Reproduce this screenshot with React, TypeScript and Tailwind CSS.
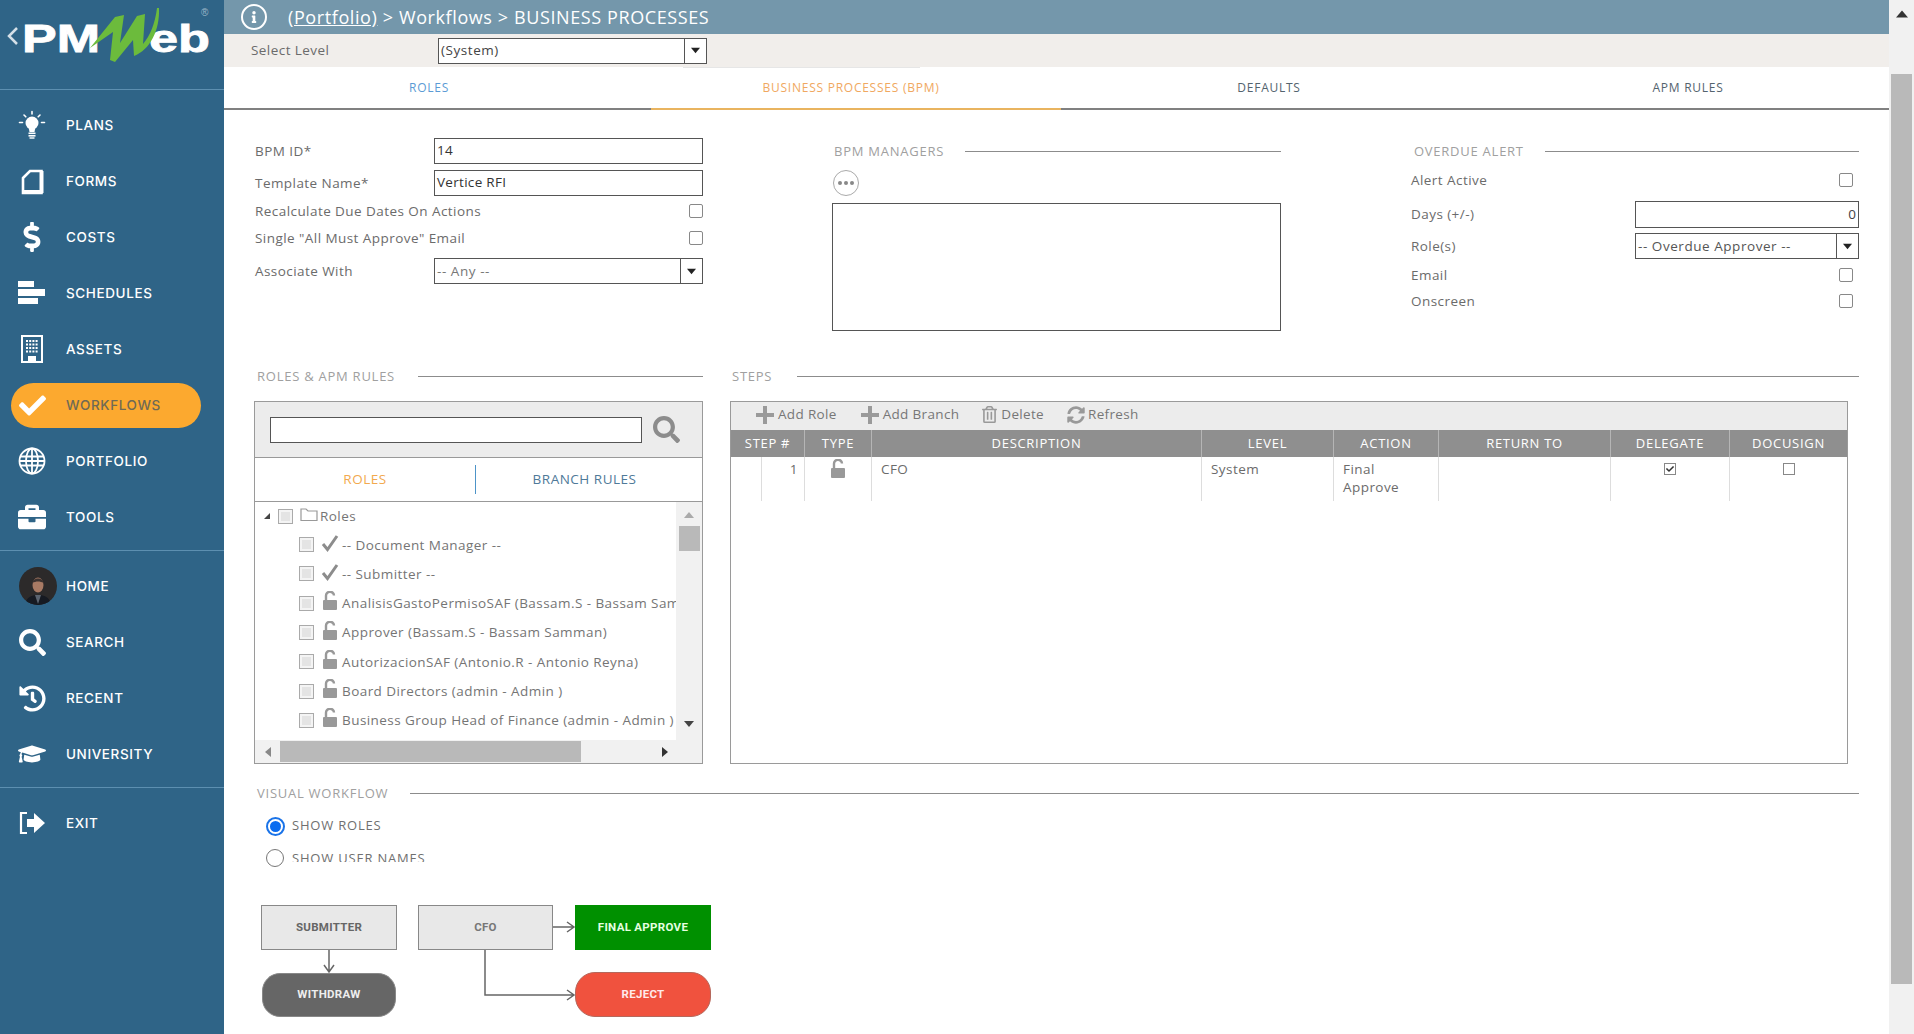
import React from 'react';
import { FaDollarSign, FaCheck, FaBriefcase, FaSearch, FaHistory, FaGraduationCap, FaRegTrashAlt, FaSyncAlt, FaInfo } from 'react-icons/fa';

const BulbIcon = () => (
  <svg width="28" height="30" viewBox="0 0 28 30" fill="white">
    <circle cx="14" cy="13" r="6.5" />
    <path d="M10.5 17h7l-1 5h-5z" />
    <rect x="10.5" y="22.5" width="7" height="1.6" />
    <rect x="10.5" y="25" width="7" height="1.6" />
    <rect x="11.5" y="27.3" width="5" height="1.4" />
    <g stroke="white" strokeWidth="1.6" strokeLinecap="round">
      <path d="M14 1.5v2.5M6 5l1.8 1.8M22 5l-1.8 1.8M1.5 12.500h3M23.500 12.500h3" />
    </g>
  </svg>
);

const FormIcon = () => (
  <svg width="24" height="28" viewBox="0 0 24 28" fill="none" stroke="white" strokeWidth="2.6">
    <path d="M3 11 10 4h11.500v22H3z" />
    <path d="M21.500 4v22" strokeWidth="4" />
    <path d="M3 25h18" strokeWidth="4" />
  </svg>
);

const ScheduleIcon = () => (
  <svg width="28" height="26" viewBox="0 0 28 26" fill="white">
    <rect x="0" y="1" width="16" height="6" />
    <rect x="0" y="9" width="27" height="7" />
    <rect x="0" y="18" width="20" height="6" />
  </svg>
);

const BuildingIcon = () => (
  <svg width="24" height="28" viewBox="0 0 24 28">
    <rect x="2" y="1" width="20" height="26" fill="none" stroke="white" strokeWidth="2" />
    <path d="M6 6h12M6 9.500h12M6 13h12M6 16.500h12" stroke="white" strokeWidth="2" strokeDasharray="2 1.200" />
    <rect x="8" y="21" width="8" height="6" fill="white" />
  </svg>
);

const GlobeIcon = () => (
  <svg width="28" height="28" viewBox="0 0 28 28" fill="none" stroke="white" strokeWidth="1.800">
    <circle cx="14" cy="14" r="12.500" />
    <ellipse cx="14" cy="14" rx="6" ry="12.500" />
    <path d="M14 1.500v25M2 9.500h24M2 18.500h24M1.500 14h25" />
  </svg>
);

const ExitIcon = () => (
  <svg width="28" height="24" viewBox="0 0 28 24">
    <path d="M9 2H3v20h6" fill="none" stroke="white" strokeWidth="2.200" />
    <path d="M9 8h7V2l11 10-11 10v-6H9z" fill="white" />
  </svg>
);

const Avatar = () => (
  <svg width="38" height="38" viewBox="0 0 38 38" className="rounded-full shrink-0 ml-[1px] -mr-[11px]">
    <rect width="38" height="38" fill="#2c2a2a" />
    <path d="M6 38c1-8 7-10 13-10s12 2 13 10z" fill="#161a22" />
    <path d="M16 28l3 9 3-9z" fill="#5b6470" />
    <ellipse cx="19" cy="18" rx="5.500" ry="7.500" fill="#a87a64" />
    <path d="M13.500 16c0-6 11-6 11 0-3-2-8-2-11 0z" fill="#3b3230" />
  </svg>
);

const navTop = [
  { label: 'PLANS', icon: <BulbIcon /> },
  { label: 'FORMS', icon: <FormIcon /> },
  { label: 'COSTS', icon: <FaDollarSign size={30} color="white" /> },
  { label: 'SCHEDULES', icon: <ScheduleIcon /> },
  { label: 'ASSETS', icon: <BuildingIcon /> },
  { label: 'WORKFLOWS', icon: <FaCheck size={27} color="white" />, active: true },
  { label: 'PORTFOLIO', icon: <GlobeIcon /> },
  { label: 'TOOLS', icon: <FaBriefcase size={28} color="white" /> },
];

const navMid = [
  { label: 'HOME', icon: <Avatar /> },
  { label: 'SEARCH', icon: <FaSearch size={27} color="white" /> },
  { label: 'RECENT', icon: <FaHistory size={27} color="white" /> },
  { label: 'UNIVERSITY', icon: <FaGraduationCap size={28} color="white" /> },
];

const NavItem = ({ item }: { item: { label: string; icon: React.ReactNode; active?: boolean } }) => (
  <div className="h-[56px] flex items-center">
    <div className={`flex items-center h-[45px] w-[190px] ml-[11px] pl-[7px] rounded-full ${item.active ? 'bg-[#fca92f]' : ''}`}>
      <div className="w-[28px] flex justify-center shrink-0">{item.icon}</div>
      <span className={`ml-[20px] text-[13.5px] font-medium tracking-[0.6px] ${item.active ? 'text-[#6f6a55]' : 'text-white'}`}>{item.label}</span>
    </div>
  </div>
);

const Logo = () => (
  <svg width="224" height="90" viewBox="0 0 224 90">
    <path d="M17 28 9 36l8 8" fill="none" stroke="#d5e0e8" strokeWidth="2.500" />
    <text x="22" y="52" fill="white" stroke="white" strokeWidth="0.8" fontFamily="Liberation Sans" fontWeight="700" fontSize="38" textLength="78" lengthAdjust="spacingAndGlyphs">PM</text>
    <text x="149" y="52" fill="white" stroke="white" strokeWidth="0.8" fontFamily="Liberation Sans" fontWeight="700" fontSize="38" textLength="61" lengthAdjust="spacingAndGlyphs">eb</text>
    <path d="M90 48 115 17l9-2-4 28 17-27 8-2-2 30c7-8 12-20 14-36h2c1 22-9 42-25 48l-1-16-18 22-5-2 3-28z" fill="#6cbb3c" />
    <text x="201" y="16" fill="#9fb9ca" fontFamily="Liberation Sans" fontSize="10">®</text>
  </svg>
);

const Sidebar = () => (
  <aside className="w-[224px] shrink-0 bg-[#2f6487] font-['Inter',sans-serif] overflow-hidden">
    <div className="h-[90px] border-b border-[#5d8fb0]">
      <Logo />
    </div>
    <div className="mt-[7px]">
      {navTop.map((item) => <NavItem key={item.label} item={item} />)}
    </div>
    <div className="mt-[5px] mb-[7px] h-px bg-[#5d8fb0]" />
    {navMid.map((item) => <NavItem key={item.label} item={item} />)}
    <div className="mt-[5px] mb-[7px] h-px bg-[#5d8fb0]" />
    <NavItem item={{ label: 'EXIT', icon: <ExitIcon /> }} />
  </aside>
);

const Tri = ({ dir, className }: { dir: 'up' | 'down' | 'left' | 'right'; className: string }) => {
  const points = { up: '0,8 5,2 10,8', down: '0,2 10,2 5,8', left: '8,0 8,10 2,5', right: '2,0 2,10 8,5' }[dir];
  return (
    <svg width="10" height="10" viewBox="0 0 10 10" className={className}>
      <polygon points={points} fill="currentColor" />
    </svg>
  );
};

const Heading = ({ label, widthClass }: { label: string; widthClass: string }) => (
  <div className="flex items-center h-[20px]">
    <span className={`${widthClass} shrink-0 pt-[1px] text-[13px] text-[#a0a0a0] tracking-[0.75px] whitespace-nowrap`}>{label}</span>
    <div className="flex-1 h-px bg-[#8c8c8c]" />
  </div>
);

const Box = ({ value, className }: { value: string; className: string }) => (
  <div className={`h-[26px] pb-[1px] border border-[#555] bg-white flex items-center px-[2px] text-[13.500px] tracking-[0.3px] text-[#333] ${className}`}>{value}</div>
);

const Select = ({ value, className, arrowClass, textClass }: { value: string; className: string; arrowClass: string; textClass: string }) => (
  <div className={`h-[26px] border border-[#555] bg-white flex items-center ${className}`}>
    <span className={`flex-1 px-[2px] text-[13.500px] tracking-[0.55px] whitespace-nowrap ${textClass}`}>{value}</span>
    <div className={`h-full border-l border-[#555] flex items-center justify-center ${arrowClass}`}>
      <Tri dir="down" className="text-[#222] w-[9px] h-[9px]" />
    </div>
  </div>
);

const Check = () => <div className="w-[14px] h-[14px] rounded-[2px] border border-[#888] bg-white" />;

const Label = ({ children }: { children: React.ReactNode }) => (
  <span className="text-[13.500px] text-[#6b6b6b] tracking-[0.44px] whitespace-nowrap">{children}</span>
);

const LockOpen = ({ className }: { className: string }) => (
  <svg width="16" height="20" viewBox="0 0 16 20" className={className}>
    <path d="M4 9V5a4 4 0 0 1 8-.500" fill="none" stroke="currentColor" strokeWidth="2.400" />
    <rect x="1" y="9" width="14" height="10" rx="1" fill="currentColor" />
  </svg>
);

const CheckMark = () => (
  <svg width="18" height="18" viewBox="0 0 18 18">
    <path d="M2 10l4.500 5.500L16 2" fill="none" stroke="#8c8c8c" strokeWidth="3" />
  </svg>
);

const PlusIcon = () => (
  <svg width="20" height="20" viewBox="0 0 20 20" fill="#9a9a9a">
    <rect x="8" y="1" width="4" height="18" />
    <rect x="1" y="8" width="18" height="4" />
  </svg>
);

const treeRows = [
  { text: '-- Document Manager --', mark: 'check' },
  { text: '-- Submitter --', mark: 'check' },
  { text: 'AnalisisGastoPermisoSAF (Bassam.S - Bassam Samman)', mark: 'lock' },
  { text: 'Approver (Bassam.S - Bassam Samman)', mark: 'lock' },
  { text: 'AutorizacionSAF (Antonio.R - Antonio Reyna)', mark: 'lock' },
  { text: 'Board Directors (admin - Admin )', mark: 'lock' },
  { text: 'Business Group Head of Finance (admin - Admin )', mark: 'lock' },
];

const TreeBox = () => <div className="w-[15px] h-[15px] shrink-0 border border-[#aaa] bg-[#e4e4e4] shadow-[inset_0_0_0_2px_#f4f4f4]" />;

const RolesPanel = () => (
  <div className="h-[363px] border border-[#9a9a9a] flex flex-col">
    <div className="h-[56px] bg-[#ececec] border-b border-[#999] flex items-center shrink-0">
      <div className="ml-[15px] w-[372px] h-[26px] border border-[#555] bg-white" />
      <FaSearch size={27} className="ml-[11px] text-[#8c8c8c]" />
    </div>
    <div className="h-[44px] border-b border-[#999] flex items-center shrink-0 text-[13.500px] tracking-[0.5px]">
      <div className="w-[220px] text-center text-[#f2a94e]">ROLES</div>
      <div className="w-px h-[29px] bg-[#4d94c8]" />
      <div className="flex-1 pr-[9px] text-center text-[#4f7a99]">BRANCH RULES</div>
    </div>
    <div className="flex-1 flex min-h-0">
      <div className="flex-1 min-w-0 overflow-hidden text-[13.500px] text-[#757575] tracking-[0.44px]">
        <div className="h-[28px] flex items-center pl-[8px] whitespace-nowrap">
          <svg width="8" height="8" viewBox="0 0 8 8" className="shrink-0">
            <polygon points="7,1 7,7 1,7" fill="#444" />
          </svg>
          <div className="ml-[7px]"><TreeBox /></div>
          <svg width="18" height="15" viewBox="0 0 18 15" className="ml-[7px] mb-[3px]">
            <path d="M1 13V2h5l2 2h9v9.500H1z" fill="none" stroke="#999" strokeWidth="1.200" />
          </svg>
          <span className="ml-[2px]">Roles</span>
        </div>
        {treeRows.map((row) => (
          <div key={row.text} className="h-[29.3px] flex items-center pl-[44px] whitespace-nowrap">
            <TreeBox />
            <div className="w-[28px] pl-[4px] flex justify-center shrink-0 mb-[4px]">
              {row.mark === 'check' ? <CheckMark /> : <LockOpen className="text-[#999]" />}
            </div>
            <span>{row.text}</span>
          </div>
        ))}
      </div>
      <div className="w-[26px] shrink-0 bg-[#f1f1f1] flex flex-col items-center">
        <Tri dir="up" className="text-[#aaa] mt-[8px]" />
        <div className="mt-[6px] w-[21px] h-[25px] bg-[#b9b9b9]" />
        <Tri dir="down" className="text-[#444] mt-[168px]" />
      </div>
    </div>
    <div className="h-[23px] shrink-0 bg-[#f1f1f1] flex items-center">
      <Tri dir="left" className="text-[#888] ml-[8px]" />
      <div className="ml-[7px] w-[301px] h-[21px] bg-[#b9b9b9]" />
      <Tri dir="right" className="text-[#333] ml-[79px]" />
    </div>
  </div>
);

const stepHeads = ['STEP #', 'TYPE', 'DESCRIPTION', 'LEVEL', 'ACTION', 'RETURN TO', 'DELEGATE', 'DOCUSIGN'];
const stepCols = 'grid grid-cols-[74px_67px_330px_132px_105px_172px_119px_117px]';

const ToolButton = ({ icon, label, className }: { icon: React.ReactNode; label: string; className: string }) => (
  <div className={`flex items-center gap-[3px] ${className}`}>
    {icon}
    <span>{label}</span>
  </div>
);

const StepsPanel = () => (
  <div className="h-[363px] w-[1118px] border border-[#9a9a9a]">
    <div className="h-[28px] pb-[3px] bg-[#ececec] flex items-center text-[13.500px] text-[#777] tracking-[0.33px]">
      <ToolButton className="ml-[24px]" label="Add Role" icon={<PlusIcon />} />
      <ToolButton className="ml-[23px]" label="Add Branch" icon={<PlusIcon />} />
      <ToolButton className="ml-[22px]" label="Delete" icon={<FaRegTrashAlt size={17} className="text-[#999]" />} />
      <ToolButton className="ml-[23px]" label="Refresh" icon={<FaSyncAlt size={18} className="text-[#999]" />} />
    </div>
    <div className={`${stepCols} h-[27px] bg-[#8f8f8f] text-white text-[13px] tracking-[0.7px]`}>
      {stepHeads.map((h) => (
        <div key={h} className="flex items-center justify-center border-r border-[#b5b5b5] last:border-r-0 whitespace-nowrap">{h}</div>
      ))}
    </div>
    <div className={`${stepCols} h-[44px] text-[13.500px] text-[#6b6b6b] tracking-[0.44px]`}>
      <div className="flex border-r border-[#ddd]">
        <div className="w-[31px] border-r border-[#ddd]" />
        <div className="flex-1 text-right pr-[6px] pt-[2px]">1</div>
      </div>
      <div className="border-r border-[#ddd] flex justify-center pt-[2px]"><LockOpen className="text-[#999]" /></div>
      <div className="border-r border-[#ddd] pl-[9px] pt-[2px]">CFO</div>
      <div className="border-r border-[#ddd] pl-[9px] pt-[2px]">System</div>
      <div className="border-r border-[#ddd] pl-[9px] pt-[3px] leading-[18px]">Final<br />Approve</div>
      <div className="border-r border-[#ddd]" />
      <div className="border-r border-[#ddd] flex justify-center pt-[6px]">
        <div className="w-[12px] h-[12px] border border-[#888] flex items-center justify-center">
          <FaCheck size={8} className="text-[#333]" />
        </div>
      </div>
      <div className="flex justify-center pt-[6px]">
        <div className="w-[12px] h-[12px] border border-[#888]" />
      </div>
    </div>
  </div>
);

const Flow = () => (
  <div className="relative h-[134px] font-['Roboto',sans-serif] font-bold text-[11.500px] tracking-[0.3px]">
    <svg width="500" height="134" viewBox="224 900 500 134" className="absolute left-0 top-0" fill="none" stroke="#666" strokeWidth="1.500">
      <path d="M329 950v22M324 965l5 7 5-7" />
      <path d="M553 927h21M567 922l7 5-7 5" />
      <path d="M485 950v45h89M567 990l7 5-7 5" />
    </svg>
    <div className="absolute left-[37px] top-[5px] w-[136px] h-[45px] bg-[#e8e8e8] border border-[#888] text-[#666] flex items-center justify-center">SUBMITTER</div>
    <div className="absolute left-[194px] top-[5px] w-[135px] h-[45px] bg-[#e8e8e8] border border-[#888] text-[#777] flex items-center justify-center">CFO</div>
    <div className="absolute left-[351px] top-[5px] w-[136px] h-[45px] bg-[#009000] text-[#e6ffe0] flex items-center justify-center">FINAL APPROVE</div>
    <div className="absolute left-[38px] top-[73px] w-[134px] h-[44px] bg-[#666] border border-[#888] rounded-[18px] text-[#eee] flex items-center justify-center">WITHDRAW</div>
    <div className="absolute left-[351px] top-[72px] w-[136px] h-[45px] bg-[#f0523e] border border-[#b5685c] rounded-[20px] text-[#ffeaea] flex items-center justify-center">REJECT</div>
  </div>
);

export default function App() {
  return (
    <div className="h-screen w-full flex overflow-hidden bg-white font-['Open_Sans',sans-serif]">
      <Sidebar />
      <main className="w-[1665px] shrink-0 flex flex-col overflow-hidden">
        <header className="h-[34px] shrink-0 bg-[#7497ab] flex items-center text-white text-[18px] tracking-[0.6px]">
          <div className="ml-[17px] w-[26px] h-[26px] rounded-full border-2 border-white flex items-center justify-center">
            <FaInfo size={12} />
          </div>
          <span className="ml-[21px] whitespace-pre"><span className="underline">(Portfolio)</span> {'>'} Workflows {'>'} BUSINESS PROCESSES</span>
        </header>
        <div className="h-[33px] shrink-0 bg-[#f1eeeb] flex items-center">
          <span className="ml-[27px] w-[187px] text-[13.500px] text-[#6b6b6b] tracking-[0.44px]">Select Level</span>
          <Select value="(System)" className="w-[269px]" arrowClass="w-[22px]" textClass="text-[#444]" />
        </div>
        <div className="h-px shrink-0 ml-[459px] w-[237px] bg-[#e6e6e6]" />
        <div className="h-[42px] shrink-0 flex border-b-2 border-[#808080] text-[12px] tracking-[0.75px]">
          <div className="w-[427px] pr-[17px] flex items-center justify-center text-[#5b9bd5]">ROLES</div>
          <div className="w-[410px] pr-[10px] -mb-[2px] border-b-2 border-[#e9b45f] flex items-center justify-center text-[#f0a860]">BUSINESS PROCESSES (BPM)</div>
          <div className="w-[416px] flex items-center justify-center text-[#54636e]">DEFAULTS</div>
          <div className="w-[412px] pl-[10px] flex items-center justify-center text-[#54636e]">APM RULES</div>
        </div>

        <section className="h-[256px] shrink-0 pt-[28px] flex">
          <div className="ml-[31px] w-[448px] shrink-0">
            <div className="h-[26px] flex items-center justify-between">
              <Label>BPM ID*</Label>
              <Box value="14" className="w-[269px]" />
            </div>
            <div className="h-[26px] mt-[6px] flex items-center justify-between">
              <Label>Template Name*</Label>
              <Box value="Vertice RFI" className="w-[269px]" />
            </div>
            <div className="h-[22px] mt-[4px] flex items-center justify-between">
              <Label>Recalculate Due Dates On Actions</Label>
              <Check />
            </div>
            <div className="h-[22px] mt-[5px] flex items-center justify-between">
              <Label>Single "All Must Approve" Email</Label>
              <Check />
            </div>
            <div className="h-[26px] mt-[9px] flex items-center justify-between">
              <Label>Associate With</Label>
              <Select value="-- Any --" className="w-[269px]" arrowClass="w-[22px]" textClass="text-[#777]" />
            </div>
          </div>

          <div className="ml-[129px] w-[449px] shrink-0">
            <div className="ml-[2px] mt-[3px]">
              <Heading label="BPM MANAGERS" widthClass="w-[131px]" />
            </div>
            <div className="mt-[9px] ml-[1px] w-[26px] h-[26px] rounded-full border border-[#aaa] flex items-center justify-center gap-[2px]">
              <span className="w-[4px] h-[4px] rounded-full bg-[#888]" />
              <span className="w-[4px] h-[4px] rounded-full bg-[#888]" />
              <span className="w-[4px] h-[4px] rounded-full bg-[#888]" />
            </div>
            <div className="mt-[7px] h-[128px] border border-[#555]" />
          </div>

          <div className="ml-[130px] w-[448px] shrink-0">
            <div className="ml-[3px] mt-[3px]">
              <Heading label="OVERDUE ALERT" widthClass="w-[131px]" />
            </div>
            <div className="h-[22px] mt-[8px] flex items-center justify-between pr-[6px]">
              <Label>Alert Active</Label>
              <Check />
            </div>
            <div className="h-[27px] mt-[10px] flex items-center justify-between">
              <Label>Days (+/-)</Label>
              <div className="w-[224px] h-[27px] border border-[#555] flex items-center justify-end pr-[2px] text-[13.500px] text-[#444]">0</div>
            </div>
            <div className="h-[26px] mt-[5px] flex items-center justify-between">
              <Label>Role(s)</Label>
              <Select value="-- Overdue Approver --" className="w-[224px]" arrowClass="w-[22px]" textClass="text-[#555]" />
            </div>
            <div className="h-[22px] mt-[5px] flex items-center justify-between pr-[6px]">
              <Label>Email</Label>
              <Check />
            </div>
            <div className="h-[22px] mt-[4px] flex items-center justify-between pr-[6px]">
              <Label>Onscreen</Label>
              <Check />
            </div>
          </div>
        </section>

        <section className="shrink-0 pl-[30px] flex">
          <div className="w-[449px] shrink-0">
            <div className="ml-[3px] mb-[15px]">
              <Heading label="ROLES & APM RULES" widthClass="w-[161px]" />
            </div>
            <RolesPanel />
          </div>
          <div className="ml-[27px] w-[1129px] shrink-0">
            <div className="ml-[2px] mb-[15px]">
              <Heading label="STEPS" widthClass="w-[65px]" />
            </div>
            <StepsPanel />
          </div>
        </section>

        <section className="shrink-0 mt-[19px]">
          <div className="ml-[33px] w-[1602px]">
            <Heading label="VISUAL WORKFLOW" widthClass="w-[153px]" />
          </div>
          <div className="ml-[42px] mt-[12px] h-[22px] flex items-center text-[13px] text-[#707070] tracking-[0.8px]">
            <div className="w-[19px] h-[19px] rounded-full border-2 border-[#1a73e8] flex items-center justify-center">
              <span className="w-[11px] h-[11px] rounded-full bg-[#0a6cf0]" />
            </div>
            <span className="ml-[7px]">SHOW ROLES</span>
          </div>
          <div className="ml-[42px] mt-[11px] h-[20px] flex items-start text-[13px] text-[#707070] tracking-[0.8px]">
            <div className="w-[18px] h-[18px] mt-[1px] rounded-full border border-[#777]" />
            <span className="ml-[8px] h-[14px] leading-[20px] overflow-hidden">SHOW USER NAMES</span>
          </div>
          <div className="mt-[32px]">
            <Flow />
          </div>
        </section>
      </main>
      <div className="flex-1 bg-[#f1f1f1] flex flex-col items-center">
        <Tri dir="up" className="text-[#333] mt-[8px] w-[12px] h-[12px]" />
        <div className="mt-[54px] w-[21px] h-[910px] bg-[#b9b9b9]" />
      </div>
    </div>
  );
}
